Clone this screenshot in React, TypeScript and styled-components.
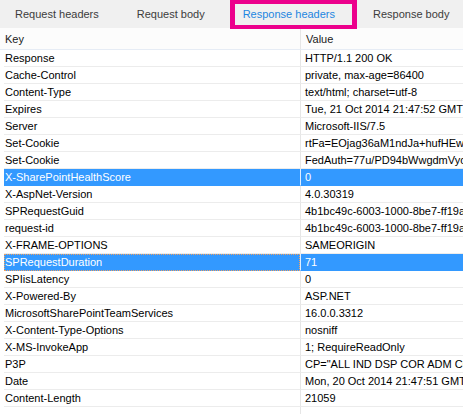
import React from "react";
import styled, { createGlobalStyle } from "styled-components";

const Global = createGlobalStyle`
  html, body { margin: 0; padding: 0; background: #ffffff; }
  body { font-family: "Liberation Sans", Arial, sans-serif; font-size: 11px; }
`;

const Page = styled.div`
  width: 463px;
  height: 414px;
  overflow: hidden;
  display: flex;
  flex-direction: column;
  background: #ffffff;
`;

const TabBar = styled.div`
  height: 28px;
  flex: none;
  display: flex;
  align-items: stretch;
  background: #f0f0f0;
  padding-left: 15px;
  gap: 38px;
  position: relative;
  z-index: 1;
`;

const Tab = styled.div<{ $active?: boolean }>`
  position: relative;
  display: flex;
  align-items: center;
  font-size: 11px;
  color: ${(p) => (p.$active ? "#1d86e0" : "#3c3c3c")};
  white-space: nowrap;
  ${(p) =>
    p.$active &&
    `
    &::after {
      content: "";
      position: absolute;
      left: -13px;
      right: -22px;
      top: 0;
      bottom: -1px;
      border: 5px solid #ec008c;
      border-top-width: 4px;
      border-bottom-width: 4px;
    }
  `}
`;

const Table = styled.div`
  flex: 1;
  display: grid;
  grid-template-columns: 300px 1fr;
  grid-auto-rows: min-content;
  background: linear-gradient(#e6e6e6, #e6e6e6) 300px 0 / 1px 100% no-repeat;
`;

const HeadCell = styled.div`
  height: 21px;
  line-height: 22px;
  padding-left: 5px;
  color: #1a1a1a;
  background: #fcfcfc;
  border-bottom: 1px solid #e6ecf5;
  white-space: nowrap;
  overflow: hidden;
  & + & {
    border-left: 1px solid #e6e6e6;
  }
`;

const Cell = styled.div<{ $sel?: boolean; $focus?: boolean; $value?: boolean }>`
  height: 16px;
  line-height: 17px;
  padding-left: ${(p) => (p.$value ? "4px" : "1px")};
  margin-left: ${(p) => (p.$value ? "0" : "4px")};
  border-bottom: 1px solid ${(p) => (p.$sel ? "#3399ff" : "#ececec")};
  border-left: ${(p) => (p.$value ? `1px solid ${p.$sel ? "#dfeeff" : "#e6e6e6"}` : "none")};
  background: ${(p) => (p.$sel ? "#3399ff" : "transparent")};
  color: ${(p) => (p.$sel ? "#ffffff" : "#000000")};
  white-space: nowrap;
  overflow: hidden;
  ${(p) =>
    p.$focus &&
    `
    outline: 1px dotted #f0a060;
    outline-offset: -1px;
  `}
`;

const rows: [string, string][] = [
  ["Response", "HTTP/1.1 200 OK"],
  ["Cache-Control", "private, max-age=86400"],
  ["Content-Type", "text/html; charset=utf-8"],
  ["Expires", "Tue, 21 Oct 2014 21:47:52 GMT"],
  ["Server", "Microsoft-IIS/7.5"],
  ["Set-Cookie", "rtFa=EOjag36aM1ndJa+hufHEwJ3xZ0KjLmW"],
  ["Set-Cookie", "FedAuth=77u/PD94bWwgdmVyc2lvbj0iMS4wIj8+"],
  ["X-SharePointHealthScore", "0"],
  ["X-AspNet-Version", "4.0.30319"],
  ["SPRequestGuid", "4b1bc49c-6003-1000-8be7-ff19a1b2c3d4"],
  ["request-id", "4b1bc49c-6003-1000-8be7-ff19a1b2c3d4"],
  ["X-FRAME-OPTIONS", "SAMEORIGIN"],
  ["SPRequestDuration", "71"],
  ["SPIisLatency", "0"],
  ["X-Powered-By", "ASP.NET"],
  ["MicrosoftSharePointTeamServices", "16.0.0.3312"],
  ["X-Content-Type-Options", "nosniff"],
  ["X-MS-InvokeApp", "1; RequireReadOnly"],
  ["P3P", 'CP="ALL IND DSP COR ADM CONo CUR CUSo IVAo"'],
  ["Date", "Mon, 20 Oct 2014 21:47:51 GMT"],
  ["Content-Length", "21059"],
];

const selected = new Set([7, 12]);

export default function App() {
  return (
    <Page>
      <Global />
      <TabBar>
        <Tab>Request headers</Tab>
        <Tab>Request body</Tab>
        <Tab $active>Response headers</Tab>
        <Tab>Response body</Tab>
      </TabBar>
      <Table>
        <HeadCell>Key</HeadCell>
        <HeadCell>Value</HeadCell>
        {rows.map(([k, v], i) => (
          <React.Fragment key={i}>
            <Cell $sel={selected.has(i)} $focus={i === 12}>
              {k}
            </Cell>
            <Cell $value $sel={selected.has(i)}>
              {v}
            </Cell>
          </React.Fragment>
        ))}
      </Table>
    </Page>
  );
}
